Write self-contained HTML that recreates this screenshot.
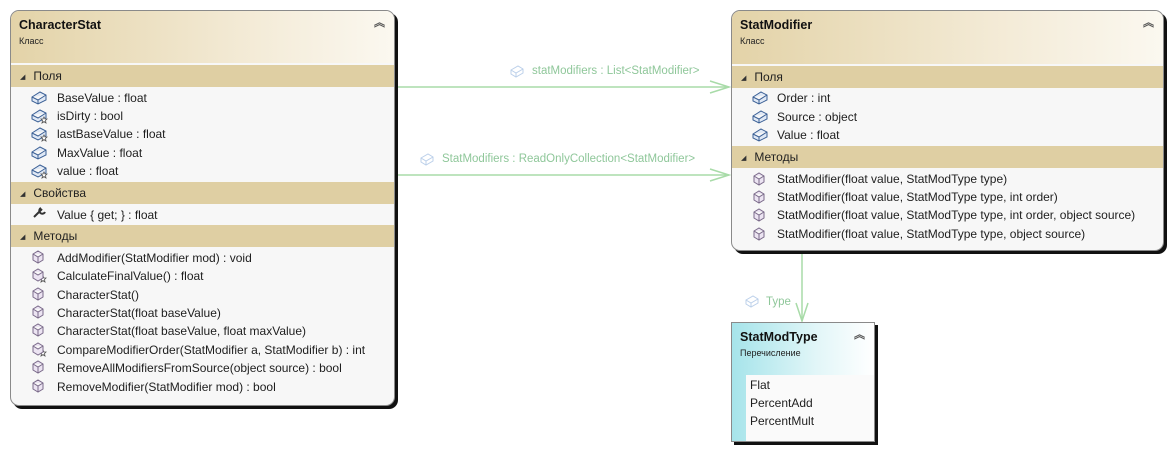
<!DOCTYPE html>
<html><head><meta charset="utf-8"><style>
body{margin:0;width:1171px;height:450px;background:#fff;position:relative;overflow:hidden;font-family:"Liberation Sans","DejaVu Sans",sans-serif;font-size:12px;color:#1e1e1e}
.box{position:absolute;background:#f7f7f7;border:1px solid #8a8a8a;border-radius:9px;box-shadow:3px 3px 0 #111;overflow:hidden}
.hdr{position:absolute;left:0;right:0;top:0;background:linear-gradient(90deg,#e3d3a8,#f3ead5 60%,#fbf8f0)}
.t{position:absolute;left:8px;top:7px;font-weight:bold;font-size:12.5px;color:#111}
.s{position:absolute;left:8px;top:25px;font-size:9px;color:#222}
.chev{position:absolute;right:9px;top:3px;font-size:11px;color:#555;font-weight:bold}
.band{position:absolute;left:0;right:0;background:#dfcfa3;height:22px;line-height:22px;padding-left:9px;font-size:12px;color:#222}
.band:before{content:"◢";font-size:7px;margin-right:8px;position:relative;top:-1px;color:#333}
.row{position:absolute;height:18px;line-height:18px;white-space:nowrap}
.lbl{position:absolute;font-size:11.5px;color:#8fc79a;white-space:nowrap}
</style></head><body>
<svg width="1171" height="450" style="position:absolute;left:0;top:0">
<g stroke="#a8dba8" stroke-width="1.5" fill="none">
<line x1="394" y1="87" x2="729" y2="87"/><polyline points="710,81 729,87 710,93"/>
<line x1="394" y1="175" x2="729" y2="175"/><polyline points="710,169 729,175 710,181"/>
<line x1="802" y1="250" x2="802" y2="321"/><polyline points="796,303 802,321 808,303"/>
</g></svg>
<div class="lbl" style="left:532px;top:65px">statModifiers : List&lt;StatModifier&gt;</div>
<div class="lbl" style="left:442px;top:153px">StatModifiers : ReadOnlyCollection&lt;StatModifier&gt;</div>
<div class="lbl" style="left:766px;top:296px">Type</div>
<svg style="position:absolute;left:510px;top:65px" width="14" height="14"><path d="M1 5 L8 1 L13 4 L13 8 L6 12 L1 9 Z M1 5 L6 8 L13 4 M6 8 L6 12" stroke="#bcd0ea" fill="none"/></svg>
<svg style="position:absolute;left:420px;top:153px" width="14" height="14"><path d="M1 5 L8 1 L13 4 L13 8 L6 12 L1 9 Z M1 5 L6 8 L13 4 M6 8 L6 12" stroke="#bcd0ea" fill="none"/></svg>
<svg style="position:absolute;left:745px;top:295px" width="14" height="14"><path d="M1 5 L8 1 L13 4 L13 8 L6 12 L1 9 Z M1 5 L6 8 L13 4 M6 8 L6 12" stroke="#bcd0ea" fill="none"/></svg>

<div class="box" style="left:10px;top:10px;width:383px;height:394px">
<div class="hdr" style="height:52px"><div class="t">CharacterStat</div><div class="s">Класс</div><div class="chev">︽</div></div>
<div class="band" style="top:54px">Поля</div>
<div class="row" style="top:78px;left:46px">BaseValue : float</div>
<div class="row" style="top:96px;left:46px">isDirty : bool</div>
<div class="row" style="top:114px;left:46px">lastBaseValue : float</div>
<div class="row" style="top:133px;left:46px">MaxValue : float</div>
<div class="row" style="top:151px;left:46px">value : float</div>
<div class="band" style="top:171px">Свойства</div>
<div class="row" style="top:195px;left:46px">Value { get; } : float</div>
<div class="band" style="top:214px">Методы</div>
<div class="row" style="top:238px;left:46px">AddModifier(StatModifier mod) : void</div>
<div class="row" style="top:256px;left:46px">CalculateFinalValue() : float</div>
<div class="row" style="top:275px;left:46px">CharacterStat()</div>
<div class="row" style="top:293px;left:46px">CharacterStat(float baseValue)</div>
<div class="row" style="top:311px;left:46px">CharacterStat(float baseValue, float maxValue)</div>
<div class="row" style="top:330px;left:46px">CompareModifierOrder(StatModifier a, StatModifier b) : int</div>
<div class="row" style="top:348px;left:46px">RemoveAllModifiersFromSource(object source) : bool</div>
<div class="row" style="top:367px;left:46px">RemoveModifier(StatModifier mod) : bool</div>
<svg style="position:absolute;left:20px;top:80px" width="20" height="310">
<g fill="#dfe8f5" stroke="#3a5f95">
<path d="M1 6 L9 1 L15 4 L15 9 L7 13 L1 10 Z M1 6 L7 9 L15 4 M7 9 L7 13"/>
<path transform="translate(0,18)" d="M1 6 L9 1 L15 4 L15 9 L7 13 L1 10 Z M1 6 L7 9 L15 4"/>
<path transform="translate(0,36)" d="M1 6 L9 1 L15 4 L15 9 L7 13 L1 10 Z M1 6 L7 9 L15 4"/>
<path transform="translate(0,55)" d="M1 6 L9 1 L15 4 L15 9 L7 13 L1 10 Z M1 6 L7 9 L15 4 M7 9 L7 13"/>
<path transform="translate(0,73)" d="M1 6 L9 1 L15 4 L15 9 L7 13 L1 10 Z M1 6 L7 9 L15 4"/>
</g>
<g fill="#fff" stroke="#555" stroke-width="0.8">
<path transform="translate(10,26)" d="M3 0 L4 2 L6 2 L4.5 3.5 L5 6 L3 4.5 L1 6 L1.5 3.5 L0 2 L2 2 Z"/>
<path transform="translate(10,44)" d="M3 0 L4 2 L6 2 L4.5 3.5 L5 6 L3 4.5 L1 6 L1.5 3.5 L0 2 L2 2 Z"/>
<path transform="translate(10,81)" d="M3 0 L4 2 L6 2 L4.5 3.5 L5 6 L3 4.5 L1 6 L1.5 3.5 L0 2 L2 2 Z"/>
<path transform="translate(9,185)" d="M3 0 L4 2 L6 2 L4.5 3.5 L5 6 L3 4.5 L1 6 L1.5 3.5 L0 2 L2 2 Z"/>
<path transform="translate(9,259)" d="M3 0 L4 2 L6 2 L4.5 3.5 L5 6 L3 4.5 L1 6 L1.5 3.5 L0 2 L2 2 Z"/>
</g>
<path d="M3 126 L11 118 M10 117 a3 3 0 1 0 4 4" stroke="#333" stroke-width="2" fill="none"/>
<g fill="#ece4f2" stroke="#7a6a8a">
<path transform="translate(1,160)" d="M1 3 L6 0 L11 3 L11 9 L6 12 L1 9 Z M1 3 L6 6 L11 3 M6 6 L6 12"/>
<path transform="translate(1,178)" d="M1 3 L6 0 L11 3 L11 9 L6 12 L1 9 Z M1 3 L6 6 L11 3"/>
<path transform="translate(1,197)" d="M1 3 L6 0 L11 3 L11 9 L6 12 L1 9 Z M1 3 L6 6 L11 3 M6 6 L6 12"/>
<path transform="translate(1,215)" d="M1 3 L6 0 L11 3 L11 9 L6 12 L1 9 Z M1 3 L6 6 L11 3 M6 6 L6 12"/>
<path transform="translate(1,233)" d="M1 3 L6 0 L11 3 L11 9 L6 12 L1 9 Z M1 3 L6 6 L11 3 M6 6 L6 12"/>
<path transform="translate(1,252)" d="M1 3 L6 0 L11 3 L11 9 L6 12 L1 9 Z M1 3 L6 6 L11 3"/>
<path transform="translate(1,270)" d="M1 3 L6 0 L11 3 L11 9 L6 12 L1 9 Z M1 3 L6 6 L11 3 M6 6 L6 12"/>
<path transform="translate(1,289)" d="M1 3 L6 0 L11 3 L11 9 L6 12 L1 9 Z M1 3 L6 6 L11 3 M6 6 L6 12"/>
</g></svg>
</div>

<div class="box" style="left:731px;top:10px;width:431px;height:239px">
<div class="hdr" style="height:53px"><div class="t">StatModifier</div><div class="s">Класс</div><div class="chev">︽</div></div>
<div class="band" style="top:55px">Поля</div>
<div class="row" style="top:78px;left:45px">Order : int</div>
<div class="row" style="top:97px;left:45px">Source : object</div>
<div class="row" style="top:115px;left:45px">Value : float</div>
<div class="band" style="top:135px">Методы</div>
<div class="row" style="top:159px;left:45px">StatModifier(float value, StatModType type)</div>
<div class="row" style="top:177px;left:45px">StatModifier(float value, StatModType type, int order)</div>
<div class="row" style="top:195px;left:45px">StatModifier(float value, StatModType type, int order, object source)</div>
<div class="row" style="top:214px;left:45px">StatModifier(float value, StatModType type, object source)</div>
<svg style="position:absolute;left:20px;top:80px" width="20" height="160">
<g fill="#dfe8f5" stroke="#3a5f95">
<path d="M1 6 L9 1 L15 4 L15 9 L7 13 L1 10 Z M1 6 L7 9 L15 4 M7 9 L7 13"/>
<path transform="translate(0,19)" d="M1 6 L9 1 L15 4 L15 9 L7 13 L1 10 Z M1 6 L7 9 L15 4 M7 9 L7 13"/>
<path transform="translate(0,37)" d="M1 6 L9 1 L15 4 L15 9 L7 13 L1 10 Z M1 6 L7 9 L15 4 M7 9 L7 13"/>
</g>
<g fill="#ece4f2" stroke="#7a6a8a">
<path transform="translate(1,82)" d="M1 3 L6 0 L11 3 L11 9 L6 12 L1 9 Z M1 3 L6 6 L11 3 M6 6 L6 12"/>
<path transform="translate(1,100)" d="M1 3 L6 0 L11 3 L11 9 L6 12 L1 9 Z M1 3 L6 6 L11 3 M6 6 L6 12"/>
<path transform="translate(1,118)" d="M1 3 L6 0 L11 3 L11 9 L6 12 L1 9 Z M1 3 L6 6 L11 3 M6 6 L6 12"/>
<path transform="translate(1,137)" d="M1 3 L6 0 L11 3 L11 9 L6 12 L1 9 Z M1 3 L6 6 L11 3 M6 6 L6 12"/>
</g></svg>
</div>

<div class="box" style="left:731px;top:322px;width:142px;height:118px;border-radius:0;background:linear-gradient(90deg,#a6e4ea,#e2f6f8 60%,#fff)">
<div class="t" style="top:7px">StatModType</div><div class="s" style="top:25px">Перечисление</div><div class="chev">︽</div>
<div style="position:absolute;left:14px;top:52px;right:0;bottom:0;background:#fafafa"></div>
<div class="row" style="top:53px;left:18px">Flat</div>
<div class="row" style="top:71px;left:18px">PercentAdd</div>
<div class="row" style="top:89px;left:18px">PercentMult</div>
</div>
</body></html>
